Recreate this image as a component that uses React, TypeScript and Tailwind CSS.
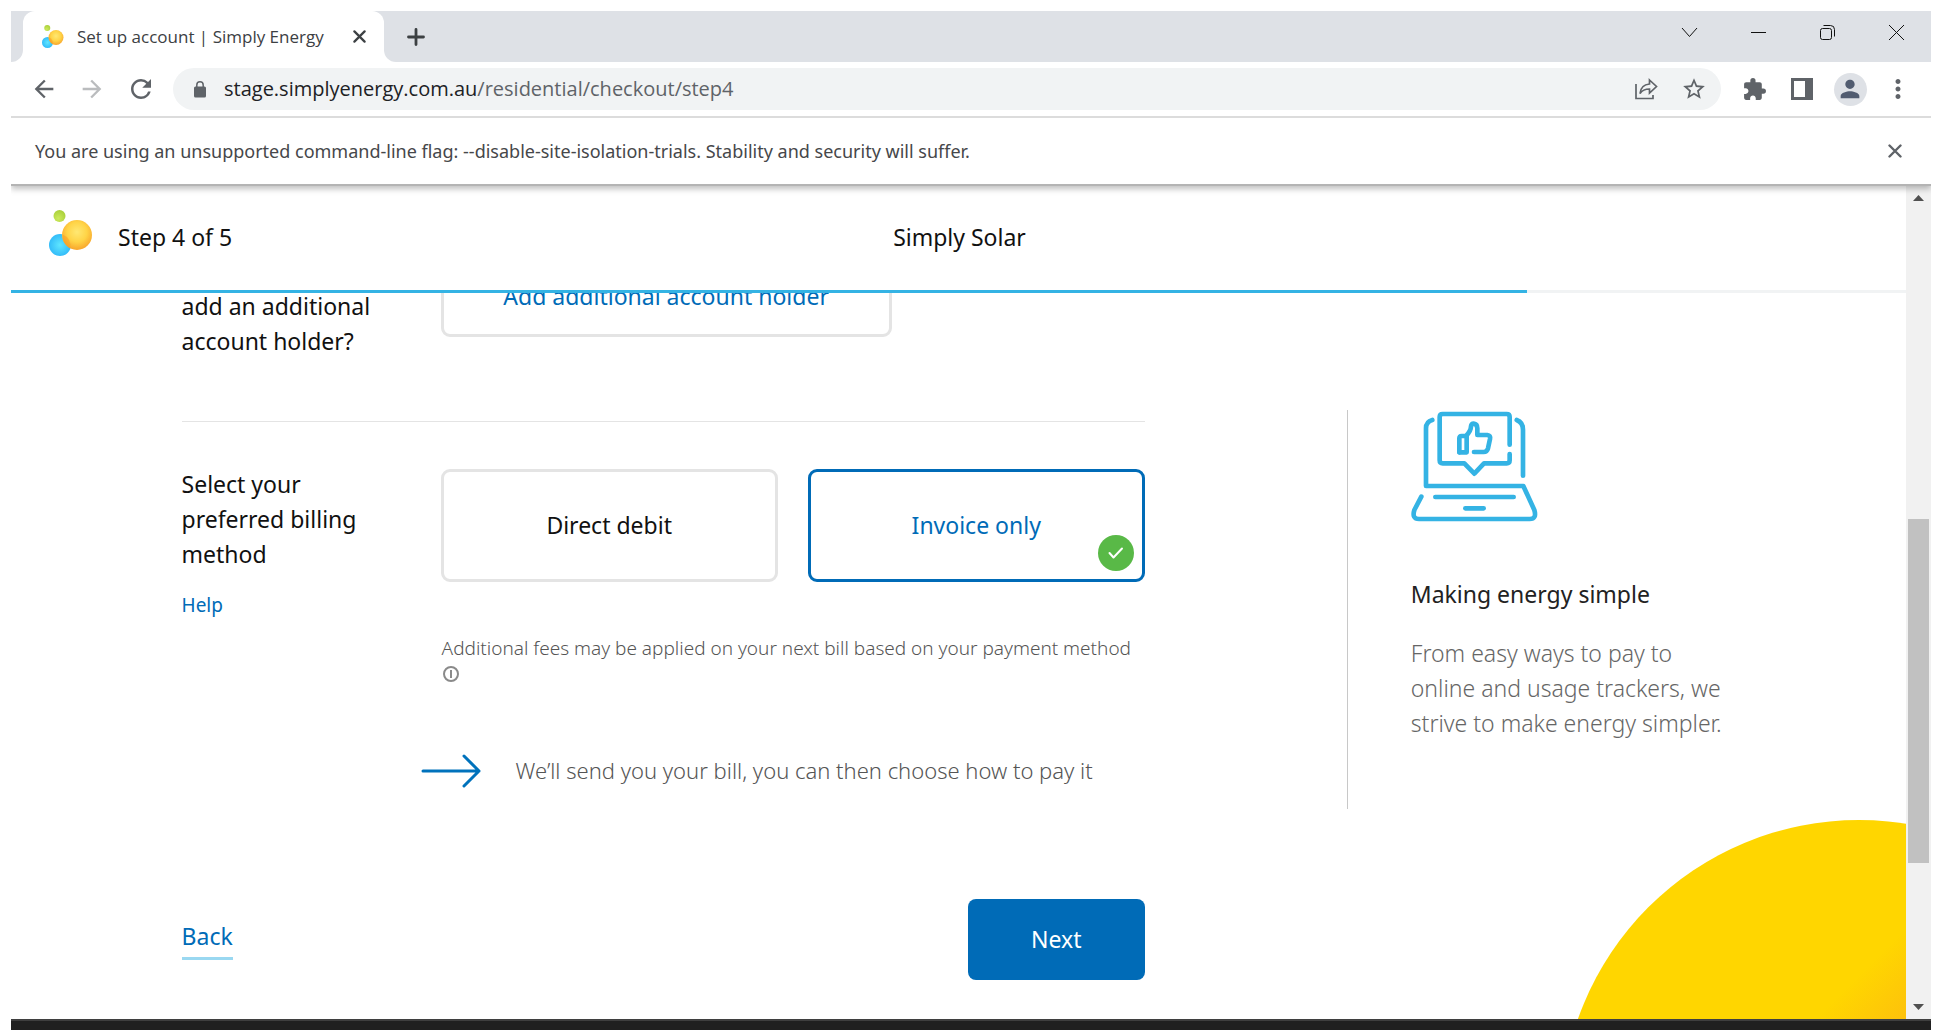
import React from "react";
import { MdArrowBack, MdArrowForward, MdRefresh, MdStarBorder, MdExtension, MdPerson, MdMoreVert } from "react-icons/md";

function BubbleLogo({ id, className }: { id: string; className: string }) {
  return (
    <svg viewBox="0 0 44 46" className={className} aria-hidden="true">
      <defs>
        <radialGradient id={`${id}-g`} cx="0.4" cy="0.7" r="0.7">
          <stop offset="0" stopColor="#cdea5c" />
          <stop offset="1" stopColor="#a9d03a" />
        </radialGradient>
        <radialGradient id={`${id}-b`} cx="0.5" cy="0.5" r="0.55">
          <stop offset="0" stopColor="#5fe6ff" />
          <stop offset="1" stopColor="#2fb8f8" />
        </radialGradient>
        <radialGradient id={`${id}-o`} cx="0.5" cy="0.4" r="0.6">
          <stop offset="0" stopColor="#ffe873" />
          <stop offset="0.55" stopColor="#ffd447" />
          <stop offset="1" stopColor="#f8a52c" />
        </radialGradient>
      </defs>
      <circle cx="10.500" cy="6" r="6" fill={`url(#${id}-g)`} />
      <circle cx="11" cy="35" r="11" fill={`url(#${id}-b)`} />
      <circle cx="28" cy="25" r="15" fill={`url(#${id}-o)`} />
      <path d="M14 29a15 15 0 0 0 7 9.300a11 11 0 0 0-7-13.500z" fill="#f79a1f" opacity="0.45" />
    </svg>
  );
}

function CrossIcon({ size }: { size: number }) {
  return (
    <svg width={size} height={size} viewBox="0 0 14 14" fill="none" stroke="currentColor" strokeWidth="2.400" strokeLinecap="round">
      <path d="M1.500 1.500l11 11M12.500 1.500l-11 11" />
    </svg>
  );
}

function TabStrip() {
  return (
    <div className="flex h-[51px] items-stretch bg-[#dee1e6]">
      <div className="w-3 shrink-0 bg-white">
        <div className="h-full rounded-br-xl bg-[#dee1e6]" />
      </div>
      <div className="bg-[#dee1e6]">
        <div className="flex h-full w-[361px] items-center rounded-t-xl bg-white pr-[18px] pl-[19px]">
          <BubbleLogo id="tab" className="h-[23px] w-[22px] shrink-0" />
          <span className="ml-[13px] flex-1 whitespace-nowrap text-[17px] text-[#3c4043]">Set up account | Simply Energy</span>
          <button aria-label="Close tab" className="text-[#3c4043]">
            <CrossIcon size={13} />
          </button>
        </div>
      </div>
      <div className="flex flex-1 bg-white">
        <div className="flex flex-1 items-center justify-between rounded-bl-xl bg-[#dee1e6] pr-[26px] pl-[23px]">
          <button aria-label="New tab" className="text-[#3c4043]">
            <svg width="18" height="18" viewBox="0 0 18 18" fill="none" stroke="currentColor" strokeWidth="2.800" strokeLinecap="round"><path d="M9 1.500v15M1.500 9h15" /></svg>
          </button>
          <div className="flex items-center gap-[52px] pb-2">
            <button aria-label="Search tabs">
              <svg width="17" height="17" viewBox="0 0 17 17" fill="none" stroke="#111"><path d="M1 4l7.500 8.500L16 4" /></svg>
            </button>
            <button aria-label="Minimize">
              <svg width="17" height="17" viewBox="0 0 17 17" fill="none" stroke="#111"><path d="M1 8.500h15" /></svg>
            </button>
            <button aria-label="Restore">
              <svg width="17" height="17" viewBox="0 0 17 17" fill="none" stroke="#111"><rect x="1.500" y="4.500" width="11" height="11" rx="2" /><path d="M4.500 1.500h7a4 4 0 0 1 4 4v7" /></svg>
            </button>
            <button aria-label="Close window">
              <svg width="17" height="17" viewBox="0 0 17 17" fill="none" stroke="#111"><path d="M1 1l15 15M16 1L1 16" /></svg>
            </button>
          </div>
        </div>
      </div>
    </div>
  );
}

function Toolbar() {
  return (
    <div className="flex h-14 items-center border-b-2 border-[#dcdcdc] pr-[9px] pl-[19px] text-[#5f6368]">
      <div className="flex items-center gap-5">
        <button aria-label="Back"><MdArrowBack size={28} /></button>
        <button aria-label="Forward" className="text-[#babcbe]"><MdArrowForward size={28} /></button>
        <button aria-label="Reload"><MdRefresh size={30} /></button>
      </div>
      <div className="ml-[17px] flex h-[42px] flex-1 items-center rounded-full bg-[#f1f3f4] pr-[14px] pl-[21px]">
        <svg width="12" height="17" viewBox="0 0 12 17" className="shrink-0" aria-hidden="true">
          <rect y="5.500" width="12" height="11" rx="1.500" fill="currentColor" />
          <path d="M2.800 6V4a3.200 3.200 0 0 1 6.400 0v2" fill="none" stroke="currentColor" strokeWidth="1.500" />
        </svg>
        <span className="ml-[18px] flex-1 text-[20px] whitespace-nowrap">
          <span className="text-[#202124]">stage.simplyenergy.com.au</span>/residential/checkout/step4
        </span>
        <button aria-label="Share" className="mr-[23px]">
          <svg width="24" height="24" viewBox="0 0 24 24" fill="none" stroke="currentColor" strokeWidth="1.700">
            <path d="M2 7v14.500h17V18" />
            <path d="M15.500 3l7 6.500-7 6.500v-4C11 12 8 13.500 6 16.500 6.500 11.500 9.500 7.500 15.500 7z" />
          </svg>
        </button>
        <button aria-label="Bookmark"><MdStarBorder size={26} /></button>
      </div>
      <div className="ml-[9px] flex items-center">
        <button aria-label="Extensions" className="flex w-12 justify-center"><MdExtension size={25} /></button>
        <button aria-label="Side panel" className="flex w-12 justify-center">
          <svg width="22" height="22" viewBox="0 0 22 22" fill="currentColor"><path fillRule="evenodd" d="M0 0h22v22H0zM3 3v16h11V3z" /></svg>
        </button>
        <button aria-label="Profile" className="flex w-12 justify-center">
          <span className="flex size-[33px] items-center justify-center rounded-full bg-[#dee1e6] text-[#515c70]">
            <MdPerson size={28} />
          </span>
        </button>
        <button aria-label="Menu" className="flex w-12 justify-center"><MdMoreVert size={30} /></button>
      </div>
    </div>
  );
}

function InfoBar() {
  return (
    <div className="relative z-20 flex h-[68px] items-center justify-between border-b-2 border-[#b4b4b4] bg-white pr-[29px] pl-6 shadow-[0_3px_6px_rgba(0,0,0,0.25)] [clip-path:inset(0_0_-12px_0)]">
      <p className="font-['Noto_Sans',sans-serif] text-[18px] text-[#46474a]">
        You are using an unsupported command-line flag: --disable-site-isolation-trials. Stability and security will suffer.
      </p>
      <button aria-label="Dismiss" className="text-[#5f6368]">
        <CrossIcon size={14} />
      </button>
    </div>
  );
}

function Scrollbar() {
  return (
    <div className="flex w-[25px] shrink-0 flex-col items-center justify-between bg-[#f1f1f1] py-[9px]">
      <div className="h-[6px] w-[11px] bg-[#505050] [clip-path:polygon(50%_0,100%_100%,0_100%)]" />
      <div className="flex w-full flex-1 flex-col px-[2px]">
        <div className="flex-[318]" />
        <div className="flex-[344] bg-[#c1c1c1]" />
        <div className="flex-[141]" />
      </div>
      <div className="h-[6px] w-[11px] bg-[#505050] [clip-path:polygon(0_0,100%_0,50%_100%)]" />
    </div>
  );
}

function PageHeader() {
  return (
    <header className="grid h-[104px] grid-cols-3 items-center bg-white pr-9 pb-[2px] pl-[38px] text-[23px] text-[#111]">
      <div className="flex items-center gap-[25px]">
        <BubbleLogo id="head" className="mb-2 h-[46px] w-[44px]" />
        <span>Step 4 of 5</span>
      </div>
      <span className="text-center">Simply Solar</span>
    </header>
  );
}

function LaptopIcon() {
  return (
    <svg width="127" height="111" viewBox="0 0 381 333" fill="none" stroke="#34b3e4" strokeWidth="14" strokeLinecap="round" strokeLinejoin="round">
      <path d="M64 27Q45 32 45 52V225H337L370 297Q378 324 356 324H24Q2 324 10 297L31 257" />
      <path d="M317 27Q336 34 336 56V194" />
      <path d="M296 101V18Q296 9 287 9H95Q86 9 86 18V148Q86 157 95 157H160L190 188L219 157H287Q296 157 296 148V129" />
      <path d="M73 258H308M163 292H218" />
      <path d="M145 124V82Q145 75 152 75H165Q180 60 180 46Q181 38 188 38Q199 39 199 52V72H229Q239 73 237 84L231 112Q228 123 218 123H189" />
      <path d="M145 124H167V76" />
    </svg>
  );
}

export default function App() {
  return (
    <div className="flex min-h-screen flex-col bg-white px-[11px] pt-[11px] font-['Open_Sans',sans-serif]">
      <TabStrip />
      <Toolbar />
      <InfoBar />
      <div className="flex flex-1 font-['Noto_Sans',sans-serif]">
        <div className="flex min-w-0 flex-1 flex-col">
          <PageHeader />
          <main className="relative flex-1 overflow-hidden">
            <div className="absolute inset-x-0 top-0 z-10 h-[3px] bg-[#f1f3f4]" role="progressbar" aria-label="Checkout progress" aria-valuenow={80}>
              <div className="h-full w-4/5 bg-[#34b3e4]" />
            </div>
            <div className="absolute right-[-251px] bottom-[-397px] size-[596px] rounded-full bg-[linear-gradient(135deg,#ffd600_38%,#fdc00c_46%)]" />
            <div className="relative grid grid-cols-[963fr_761fr] pl-[9%]">
              <div className="text-[23px] leading-[35px] text-[#111]">
                <section className="grid grid-cols-[259fr_704fr] border-b border-[#e4e4e4] pb-[62px]">
                  <h2 className="-mt-px w-[190px]">add an additional account holder?</h2>
                  <div>
                    <button className="-mt-[33px] flex h-20 w-[451px] items-center justify-center rounded-[9px] border-[3px] border-[#e4e4e4] pb-[2px] text-[#006bb7]">
                      Add additional account holder
                    </button>
                  </div>
                </section>
                <section className="grid grid-cols-[259fr_704fr] pt-[47px]">
                  <div>
                    <h2 className="-mt-[2px] w-[190px]">Select your preferred billing method</h2>
                    <a href="#help" className="mt-4 block text-[19px] text-[#006bb7]">Help</a>
                  </div>
                  <div>
                    <div className="grid grid-cols-2 gap-[30px]">
                      <button className="h-[113px] rounded-[9px] border-[3px] border-[#e4e4e4] bg-white">Direct debit</button>
                      <button aria-pressed="true" className="relative h-[113px] rounded-[9px] border-[3px] border-[#006bb7] bg-white text-[#006bb7]">
                        Invoice only
                        <span className="absolute right-2 bottom-2 flex size-9 items-center justify-center rounded-full bg-[#59b947]">
                          <svg width="16" height="12" viewBox="0 0 16 12" fill="none" stroke="#fff" strokeWidth="2" strokeLinecap="round" strokeLinejoin="round"><path d="M1.500 6L5.500 10.500L14 1.500" /></svg>
                        </span>
                      </button>
                    </div>
                    <p className="mt-[53px] ml-px text-[19px] leading-[26px] font-light whitespace-nowrap text-[#555]">
                      Additional fees may be applied on your next bill based on your payment method
                    </p>
                    <button aria-label="Payment fee details" className="ml-px flex h-[26px] items-center">
                      <svg width="18" height="18" viewBox="0 0 18 18" fill="none" stroke="#8a8a8a" strokeWidth="2"><circle cx="9" cy="9" r="7" /><path d="M9 5v8" /></svg>
                    </button>
                    <div className="-ml-5 mt-[66px] flex items-center gap-[35px]">
                      <svg width="60" height="34" viewBox="0 0 60 34" fill="none" stroke="#0072bc" strokeWidth="3" strokeLinecap="round" strokeLinejoin="round" className="shrink-0"><path d="M2 17H58M43 2L58 17L43 32" /></svg>
                      <p className="text-[22px] font-light whitespace-nowrap text-[#555]">We’ll send you your bill, you can then choose how to pay it</p>
                    </div>
                  </div>
                </section>
                <div className="mt-[111px] mb-[39px] flex items-center justify-between">
                  <a href="#back" className="border-b-[3px] border-[#9ad8f1] pb-[3px] text-[#006bb7]">Back</a>
                  <button className="h-[81px] w-[177px] rounded-lg bg-[#006bb7] text-white">Next</button>
                </div>
              </div>
              <aside className="mt-[120px] ml-[202px] h-[399px] border-l border-[#c8c8c8] pt-px pl-[63px] text-[23px] leading-[35px]">
                <LaptopIcon />
                <h2 className="mt-[55px] text-[#222]">Making energy simple</h2>
                <p className="mt-6 w-[325px] font-light text-[#666]">From easy ways to pay to online and usage trackers, we strive to make energy simpler.</p>
              </aside>
            </div>
          </main>
        </div>
        <Scrollbar />
      </div>
      <div className="h-[11px] border-t-2 border-[#3f3f3f] bg-[#202020]" />
    </div>
  );
}
